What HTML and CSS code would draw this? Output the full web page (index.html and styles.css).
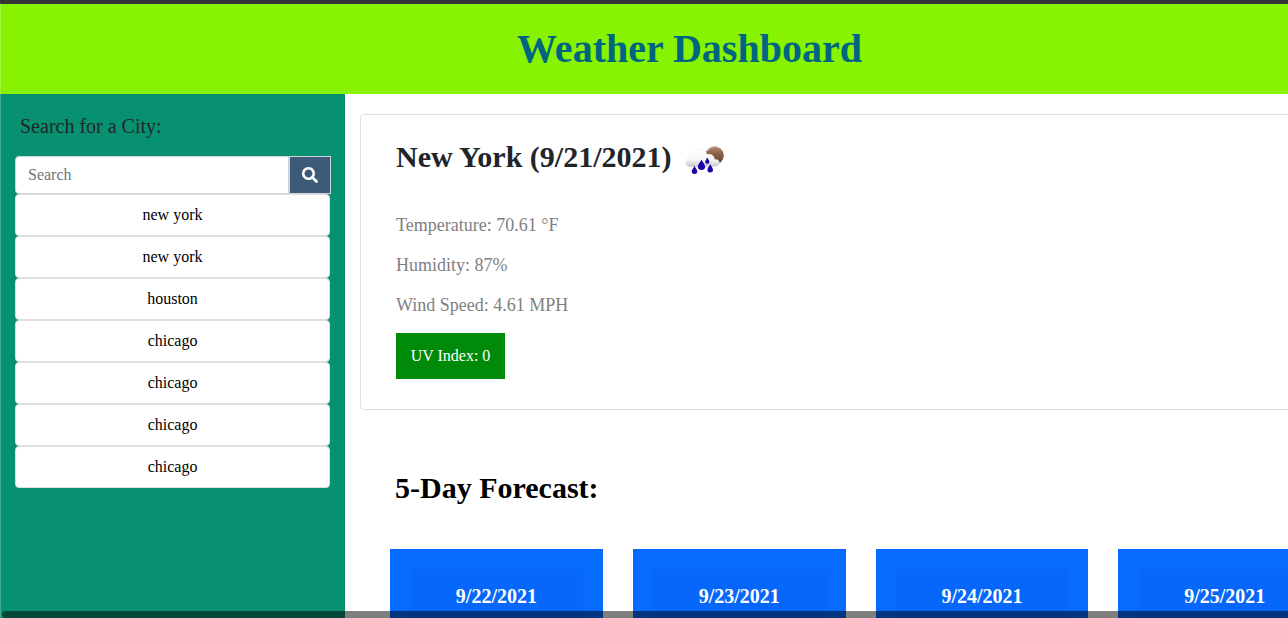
FILE: index.html
```html
<!DOCTYPE html>
<html lang="en">
<head>
<meta charset="utf-8">
<title>Weather Dashboard</title>
<link rel="stylesheet" href="styles.css">
</head>
<body>
<div class="page">
  <header class="banner"><h1>Weather Dashboard</h1></header>
  <div class="layout">
    <aside class="sidebar">
      <h2 class="search-title">Search for a City:</h2>
      <form class="search">
        <input class="search-input" type="text" placeholder="Search">
        <button class="search-button" type="button" aria-label="Search">
          <svg viewBox="0 0 512 512" width="16" height="16"><path fill="#fff" d="M505 442.7L405.3 343c-4.500-4.500-10.600-7-17-7H372c27.600-35.300 44-79.700 44-128C416 93.100 322.900 0 208 0S0 93.100 0 208s93.100 208 208 208c48.300 0 92.700-16.400 128-44v16.300c0 6.400 2.500 12.500 7 17l99.700 99.700c9.400 9.400 24.600 9.400 33.900 0l28.300-28.300c9.400-9.400 9.400-24.600.1-34zM208 336c-70.700 0-128-57.200-128-128 0-70.700 57.200-128 128-128 70.700 0 128 57.200 128 128 0 70.700-57.200 128-128 128z"/></svg>
        </button>
      </form>
      <ul class="history">
        <li>new york</li>
        <li>new york</li>
        <li>houston</li>
        <li>chicago</li>
        <li>chicago</li>
        <li>chicago</li>
        <li>chicago</li>
      </ul>
    </aside>
    <main class="content">
      <section class="current">
        <div class="city">
          <h2>New York (9/21/2021)</h2>
          <svg class="weather-icon" viewBox="0 0 50 50" width="50" height="50">
            <defs>
              <linearGradient id="sun" x1="0" y1="0" x2="0" y2="1"><stop offset="0" stop-color="#b58b74"/><stop offset=".4" stop-color="#8b6249"/><stop offset="1" stop-color="#5f402d"/></linearGradient>
              <linearGradient id="cloud" x1="0" y1="0" x2="0" y2="1"><stop offset="0" stop-color="#fff"/><stop offset=".6" stop-color="#f6f6f6"/><stop offset="1" stop-color="#c4c4c4"/></linearGradient>
              <path id="drop" d="M0-5C1-2.500 3.100-.5 3.100 2A3.100 3.100 0 0 1-3.100 2C-3.100-.5-1-2.500 0-5Z"/>
            </defs>
            <circle cx="34.500" cy="22.500" r="9.300" fill="url(#sun)"/>
            <path d="M27.500 18c2-5 9-6 13.500-2" fill="none" stroke="#e2cec1" stroke-width="1"/>
            <path d="M10 34C4.500 33.500 4.300 26.500 8.500 25C8 20.500 11.500 18.500 14 19C17.500 14.500 25.500 15.500 27 21.500C31.500 20.500 34.500 23 34.500 26.500C40.500 25.500 41 33.500 35.500 33.500Z" fill="url(#cloud)" stroke="#e6e6e6" stroke-width=".5"/>
            <g fill="#2100ad">
              <use href="#drop" transform="translate(21.500 31.800) scale(1.180 1)"/>
              <use href="#drop" transform="translate(14.500 37) scale(.9 .8)"/>
              <use href="#drop" transform="translate(30.200 35.300) scale(.9 .8)"/>
              <use href="#drop" transform="translate(27.300 27.700) scale(.65 .62)"/>
            </g>
          </svg>
        </div>
        <p>Temperature: 70.61 °F</p>
        <p>Humidity: 87%</p>
        <p>Wind Speed: 4.61 MPH</p>
        <div class="uv">UV Index: 0</div>
      </section>
      <h2 class="forecast-title">5-Day Forecast:</h2>
      <section class="forecast">
        <article class="day"><div class="day-body"><h3>9/22/2021</h3></div></article>
        <article class="day"><div class="day-body"><h3>9/23/2021</h3></div></article>
        <article class="day"><div class="day-body"><h3>9/24/2021</h3></div></article>
        <article class="day"><div class="day-body"><h3>9/25/2021</h3></div></article>
      </section>
    </main>
  </div>
</div>
<div class="window-edge"></div>
<div class="scrollbar"></div>
</body>
</html>
```
FILE: styles.css
```css
* { box-sizing: border-box; }
body {
  margin: 0;
  height: 618px;
  overflow: hidden;
  background: #fff;
  color: #212529;
  font: 16px/24px "Liberation Serif", "Times New Roman", serif;
}
h1, h2, h3, p, ul { margin: 0; padding: 0; }
.page {
  width: 1379px;
  height: 618px;
  display: flex;
  flex-direction: column;
  overflow: hidden;
  border-top: 4px solid #343536;
}
.banner {
  flex: none;
  height: 90px;
  padding-top: 21px;
  background: #87f300;
  text-align: center;
}
.banner h1 { color: #006680; font-size: 40px; line-height: 48px; }
.layout { flex: 1; display: flex; min-height: 0; }
.sidebar {
  flex: none;
  width: 345px;
  padding: 20px 15px;
  background: #089171;
}
.search-title {
  padding-left: 5px;
  margin-bottom: 18px;
  font-size: 20px;
  font-weight: 400;
  line-height: 24px;
}
.search { display: flex; width: 316px; height: 38px; }
.search-input {
  flex: 1;
  min-width: 0;
  padding: 6px 12px;
  border: 1px solid #ced4da;
  border-radius: 4px 0 0 4px;
  font: inherit;
}
.search-input::placeholder { color: #6c757d; opacity: 1; }
.search-button {
  width: 42px;
  display: flex;
  align-items: center;
  justify-content: center;
  padding: 0;
  border: 1px solid #ced4da;
  background: #3d5a78;
}
.history { list-style: none; }
.history li {
  height: 42px;
  border: 1px solid #dfdfdf;
  border-radius: 4px;
  background: #fff;
  color: #000;
  line-height: 40px;
  text-align: center;
}
.content { flex: 1; min-width: 0; padding: 20px 15px 0; }
.current {
  height: 296px;
  padding: 18px 35px;
  border: 1px solid #dfdfdf;
  border-radius: 4px;
}
.city { display: flex; align-items: center; height: 50px; margin-bottom: 30px; }
.city h2 { font-size: 30px; line-height: 36px; margin-top: -3px; }
.weather-icon { margin-left: 8px; }
.current p { height: 24px; margin-bottom: 16px; color: #808080; font-size: 18px; }
.uv {
  width: 109px;
  height: 46px;
  background: #008a09;
  color: #fff;
  line-height: 46px;
  text-align: center;
}
.forecast-title {
  margin: 60px 0 0 35px;
  color: #000;
  font-size: 30px;
  line-height: 36px;
}
.forecast {
  display: flex;
  gap: 30px;
  padding-left: 30px;
  margin-top: 43px;
}
.day {
  flex: none;
  width: 212.8px;
  height: 300px;
  padding: 20px;
  background: #076bff;
}
.day-body {
  height: 260px;
  padding-top: 15px;
  border-radius: 4px;
  background: #0767fa;
  color: #fff;
  text-align: center;
}
.day h3 { font-size: 20px; line-height: 24px; }
/* window frame edge and overlay scrollbar float above the page */
.window-edge {
  position: absolute;
  inset: 3px auto 0 0;
  width: 1px;
  background: rgba(255, 255, 255, .22);
}
.scrollbar {
  position: absolute;
  inset: 611px 0 0 2px;
  border-radius: 4px 0 0 4px;
  background: rgba(0, 0, 0, .5);
}
```
